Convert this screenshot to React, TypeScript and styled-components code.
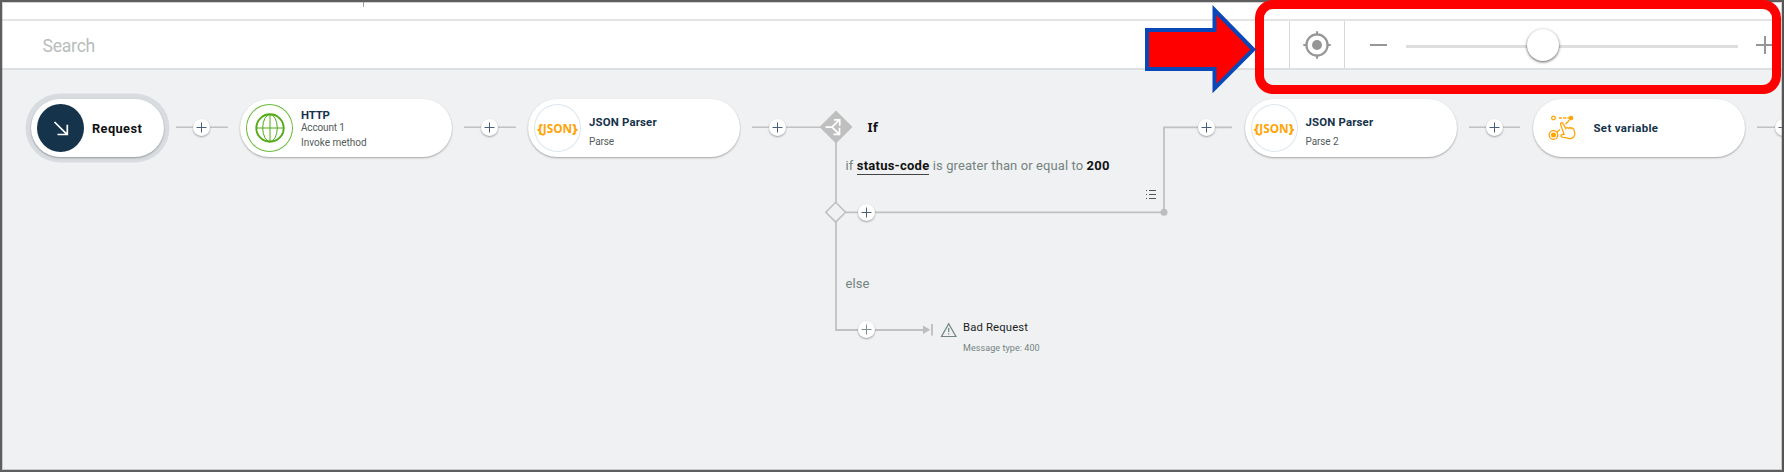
import React from 'react';
import styled, { createGlobalStyle } from 'styled-components';

const GlobalStyle = createGlobalStyle`
  *, *::before, *::after { box-sizing: border-box; }
  body { margin: 0; background: #fff; font-family: Roboto, "Liberation Sans", sans-serif; }
`;

const Frame = styled.div`
  position: relative;
  display: flex;
  flex-direction: column;
  width: 1784px;
  height: 472px;
  overflow: hidden;
  background: #fff;
`;

const FrameEdge = styled.div`
  position: absolute;
  inset: 0;
  border: 2px solid #5e5e5e;
  border-right-color: #555;
  box-shadow: inset 0 0 0 1px rgba(130, 130, 130, 0.35);
  pointer-events: none;
`;

const TopStrip = styled.div`
  height: 19px;
  padding-left: 363px;
`;

const Tick = styled.div`
  width: 1px;
  height: 7px;
  background: #9aa3a3;
`;

const Toolbar = styled.header`
  display: flex;
  align-items: stretch;
  height: 51px;
  border-top: 2px solid #e4e4e5;
  border-bottom: 2px solid #dedfe0;
`;

const SearchField = styled.div`
  flex: 0 0 1289px;
  padding-left: 42.5px;
  font-size: 17.6px;
  line-height: 50px;
  letter-spacing: -0.25px;
  color: #b9bcbc;
`;

const LocateButton = styled.div`
  display: flex;
  align-items: center;
  justify-content: center;
  width: 56px;
  padding-top: 1px;
  border-left: 1px solid #d8d8d8;
  border-right: 1px solid #d8d8d8;
`;

const ZoomControl = styled.div`
  display: flex;
  align-items: center;
  gap: 18px;
  padding: 1px 0 0 24.5px;
`;

const Track = styled.div`
  display: flex;
  align-items: center;
  width: 332px;
  height: 3px;
  margin-top: 2px;
  padding-left: 121px;
  background: #dedede;
`;

const Thumb = styled.div`
  flex: none;
  width: 32px;
  height: 32px;
  margin-top: -3px;
  border-radius: 50%;
  background: #fff;
  box-shadow: 0 1px 3px rgba(0, 0, 0, 0.65);
`;

const Canvas = styled.main`
  position: relative;
  flex: 1;
  background: #f0f1f3;
`;

const Wires = styled.svg`
  position: absolute;
  inset: 0;
`;

const Node = styled.div<{ $x: number; $w?: number; $active?: boolean }>`
  position: absolute;
  left: ${p => p.$x}px;
  top: 29px;
  display: flex;
  align-items: center;
  gap: 8px;
  width: ${p => p.$w ?? 212}px;
  height: 58px;
  padding-left: 6px;
  border-radius: 29px;
  background: #fff;
  box-shadow: 0 1px 2px rgba(0, 0, 0, 0.32)${p => (p.$active ? ', 0 0 0 5.5px #d8dce1' : '')};
`;

const Disc = styled.div<{ $fill?: string; $ring?: string }>`
  display: flex;
  align-items: center;
  justify-content: center;
  flex: none;
  width: 47px;
  height: 48px;
  border-radius: 50%;
  background: ${p => p.$fill ?? '#fff'};
  border: 1px solid ${p => p.$ring ?? 'transparent'};
`;

const JsonMark = styled.span`
  font: 700 11.8px/14px "Open Sans", "Noto Sans", sans-serif;
  white-space: nowrap;
  color: #ffa407;
`;

const Brace = styled.span`
  font-size: 13px;
  font-weight: 800;
`;

const Labels = styled.div<{ $drop: number }>`
  display: flex;
  flex-direction: column;
  padding-top: ${p => p.$drop}px;
  white-space: nowrap;
`;

const RequestTitle = styled.div`
  font-size: 12.8px;
  font-weight: 700;
  letter-spacing: 0.4px;
  color: #111;
`;

const Title = styled.div<{ $h?: number; $track?: number }>`
  font-size: 11.4px;
  font-weight: 700;
  line-height: ${p => p.$h ?? 15}px;
  letter-spacing: ${p => p.$track ?? 0.18}px;
  color: #14324a;
`;

const Sub = styled.div<{ $h?: number; $track?: number }>`
  font-size: 10px;
  line-height: ${p => p.$h ?? 14}px;
  letter-spacing: ${p => p.$track ?? -0.1}px;
  color: #545c5c;
`;

const Plus = styled.div<{ $x: number; $y: number }>`
  position: absolute;
  left: ${p => p.$x - 8.5}px;
  top: ${p => p.$y - 78.5}px;
  display: flex;
  width: 17px;
  height: 17px;
  border-radius: 50%;
  background: #fff;
  box-shadow: 0 1px 2px rgba(0, 0, 0, 0.35);
`;

const Note = styled.div<{ $x: number; $y: number; $track?: number }>`
  position: absolute;
  left: ${p => p.$x}px;
  top: ${p => p.$y - 70}px;
  font-size: 13px;
  line-height: 16px;
  letter-spacing: ${p => p.$track ?? 0.1}px;
  white-space: nowrap;
  color: #748380;
`;

const IfTitle = styled(Note)`
  font-family: "Noto Sans", sans-serif;
  font-weight: 700;
  color: #111;
`;

const Strong = styled.b<{ $line?: boolean }>`
  display: inline-block;
  height: 16.5px;
  letter-spacing: ${p => (p.$line ? 0.25 : 0.2)}px;
  border-bottom: ${p => (p.$line ? '1px solid #444' : 'none')};
  color: #111;
`;

const ErrorTitle = styled(Note)`
  font-size: 11.3px;
  color: #1c1f1f;
`;

const ErrorSub = styled(Note)`
  font-size: 9px;
`;

const Callout = styled.div`
  position: absolute;
  left: 1255px;
  top: 0;
  width: 526px;
  height: 94px;
  border: 9px solid #f00;
  border-radius: 18px;
`;

const Pointer = styled.svg`
  position: absolute;
  left: 1140px;
  top: 0;
`;

const AddButton = ({ x, y, color = '#4a6076' }: { x: number; y: number; color?: string }) => (
  <Plus $x={x} $y={y}>
    <svg width="17" height="17" viewBox="0 0 17 17">
      <path d="M3.5 8.5h10M8.5 3.5v10" stroke={color} strokeWidth="1" />
    </svg>
  </Plus>
);

const Json = () => (
  <Disc $ring="#dde6ec">
    <JsonMark><Brace>{'{'}</Brace>JSON<Brace>{'}'}</Brace></JsonMark>
  </Disc>
);

export default function App() {
  return (
    <Frame>
      <GlobalStyle />
      <TopStrip><Tick /></TopStrip>
      <Toolbar>
        <SearchField>Search</SearchField>
        <LocateButton>
          <svg width="28" height="28" viewBox="-14 -14 28 28" fill="none" stroke="#969696">
            <circle r="10.6" strokeWidth="2.2" />
            <circle r="5" fill="#969696" stroke="none" />
            <path d="M0-13.7v4M0 9.7v4M-13.7 0h4M9.7 0h4" strokeWidth="2" />
          </svg>
        </LocateButton>
        <ZoomControl>
          <svg width="18" height="18" viewBox="0 0 18 18"><path d="M0 9h17" stroke="#969696" strokeWidth="2" /></svg>
          <Track><Thumb /></Track>
          <svg width="18" height="18" viewBox="0 0 18 18"><path d="M0 9h18M9 0v18" stroke="#969696" strokeWidth="2" /></svg>
        </ZoomControl>
      </Toolbar>

      <Canvas>
        <Wires width="1784" height="402" viewBox="0 70 1784 402" fill="none">
          <g stroke="#c0c1c2" strokeWidth="1.6">
            <path d="M176 127.3h52M464 127.3h52M752 127.3h70M1469 127.3h51M1757 127.3h27" />
            <path d="M836 140v190h90" strokeWidth="1.8" />
            <path d="M846 212.3h318V127.3h68" strokeWidth="1.8" />
          </g>
          <path d="M836 110.5l16.5 16.5-16.5 16.5L819.5 127z" fill="#bfbfbf" />
          <path d="M825.5 127.2h6.5l7.5-7.5M834 119.9h5.7v5.9M832 127.2l2 1.8M833.5 134.3h6v-6.5M833.8 128.8l5.7 5.5" stroke="#fff" strokeWidth="1.7" />
          <path d="M835.7 202.3l9.9 9.9-9.9 9.9-9.9-9.9z" fill="#f0f1f3" stroke="#bebebe" strokeWidth="1.5" />
          <circle cx="1164" cy="212.3" r="3.5" fill="#bdbdbd" />
          <path d="M923 325.6l7.3 4.2-7.3 4.2z" fill="#bdbdbd" />
          <path d="M932 324v11.5" stroke="#bdbdbd" strokeWidth="1.8" />
          <path d="M948.7 323.8l7.2 12.7h-14.4z" stroke="#718481" strokeWidth="1.2" />
          <path d="M948.7 327.7v4.3M948.7 333.3v1.2" stroke="#718481" strokeWidth="1.2" />
          <g stroke="#555">
            <path d="M1149 190.5h7M1149 194.5h7M1149 198.5h7" />
            <path d="M1146 190.5h1M1146 194.5h1M1146 198.5h1" />
          </g>
        </Wires>

        <Node $x={31} $w={133} $active>
          <Disc $fill="#15344c">
            <svg width="20" height="20" viewBox="0 0 20 20" fill="none" stroke="#fff" strokeWidth="1.7">
              <path d="M3.5 4L16 16.4M6.5 16.5h9.8V6.8" />
            </svg>
          </Disc>
          <RequestTitle>Request</RequestTitle>
        </Node>
        <Node $x={240}>
          <Disc $ring="#6cbc3c">
            <svg width="30" height="30" viewBox="-15 -15 30 30" fill="none" stroke="#4fab15">
              <circle r="13.7" strokeWidth="1.9" />
              <path d="M0-14v28M-14 0h28" strokeWidth="1" />
              <ellipse rx="7.3" ry="13.5" strokeWidth="1" />
            </svg>
          </Disc>
          <Labels $drop={4}>
            <Title $h={13} $track={-0.2}>HTTP</Title>
            <Sub $h={12} $track={-0.15}>Account 1</Sub>
            <Sub $h={17} $track={0}>Invoke method</Sub>
          </Labels>
        </Node>
        <Node $x={528}>
          <Json />
          <Labels $drop={5}>
            <Title $h={22}>JSON Parser</Title>
            <Sub $h={18}>Parse</Sub>
          </Labels>
        </Node>
        <Node $x={1244.5}>
          <Json />
          <Labels $drop={5}>
            <Title $h={22}>JSON Parser</Title>
            <Sub $h={18}>Parse 2</Sub>
          </Labels>
        </Node>
        <Node $x={1532.5}>
          <Disc>
            <svg width="30" height="28" viewBox="0 0 30 28" fill="none" stroke="#ffa407" strokeWidth="1.3">
              <circle cx="6.5" cy="4" r="1.8" />
              <path d="M12 4h10" strokeDasharray="3 1.2" />
              <circle cx="24" cy="4" r="2.3" fill="#ffa407" stroke="none" />
              <path d="M22.5 6l-4 4.2M12.8 15.5l-3.3 3" />
              <circle cx="6.5" cy="21" r="4.3" />
              <circle cx="6.5" cy="21" r="2.5" fill="#ffa407" stroke="none" />
              <path d="M13.6 10.6c-.5-2 1.7-2.7 2.400-1l2.700 5c.8-1.200 2.200-1.200 2.700-.2.900-1 2.100-.8 2.600.1 1-.9 2.200-.5 2.700.7l1 3.200c.6 2.300-.8 4.900-3.300 5.900-2.100.8-3.500.2-4.800-.4l-4.600-.8c-1.600-.5-1.300-2.600.3-2.600l1.800-.1z" />
            </svg>
          </Disc>
          <Title $track={0.36}>Set variable</Title>
        </Node>

        <AddButton x={201.5} y={127.5} />
        <AddButton x={489.5} y={127.5} />
        <AddButton x={777.5} y={127.5} />
        <AddButton x={1206.5} y={127.5} />
        <AddButton x={1494.5} y={127.5} />
        <AddButton x={1783} y={127.5} />
        <AddButton x={866.5} y={212.5} />
        <AddButton x={866.5} y={329.5} color="#80908d" />

        <IfTitle $x={867.5} $y={118.5}>If</IfTitle>
        <Note $x={845.5} $y={158}>
          if <Strong $line>status-code</Strong> is greater than or equal to <Strong>200</Strong>
        </Note>
        <Note $x={845.5} $y={276}>else</Note>
        <ErrorTitle $x={963} $y={320} $track={0.15}>Bad Request</ErrorTitle>
        <ErrorSub $x={963} $y={340} $track={0.07}>Message type: 400</ErrorSub>
      </Canvas>

      <FrameEdge />
      <Callout />
      <Pointer width="120" height="100" viewBox="1140 0 120 100">
        <path d="M1147 30h67.5V10L1253.3 49.5L1214.5 88.5V69H1147z" fill="#f00" stroke="#0a47b8" strokeWidth="4" />
      </Pointer>
    </Frame>
  );
}
